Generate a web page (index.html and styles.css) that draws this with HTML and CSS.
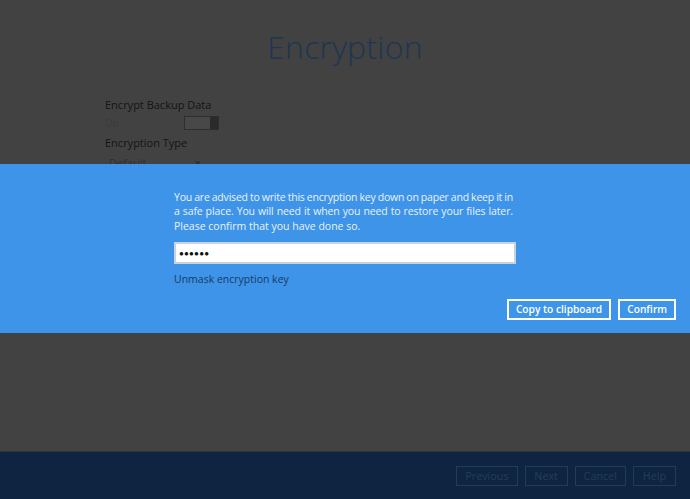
FILE: index.html
```html
<!DOCTYPE html>
<html>
<head>
<meta charset="utf-8">
<link rel="stylesheet" href="styles.css">
</head>
<body>
<div class="page">
  <main class="content">
    <h1 class="title">Encryption</h1>
    <div class="form">
      <div class="label">Encrypt Backup Data</div>
      <div class="toggle-row">
        <span class="state">On</span>
        <span class="toggle"><span class="knob"></span></span>
      </div>
      <div class="label">Encryption Type</div>
      <div class="select">Default <span class="arrow">&#9662;</span></div>
    </div>
  </main>
  <footer class="footer">
    <button class="fbtn">Previous</button>
    <button class="fbtn">Next</button>
    <button class="fbtn">Cancel</button>
    <button class="fbtn">Help</button>
  </footer>
</div>
<div class="dialog">
  <div class="dialog-inner">
    <p class="msg"><span class="line l1">You are advised to write this encryption key down on paper and keep it in</span> <span class="line l2">a safe place. You will need it when you need to restore your files later.</span> <span class="line l3">Please confirm that you have done so.</span></p>
    <div class="input">&#9679;&#9679;&#9679;&#9679;&#9679;&#9679;</div>
    <div class="unmask">Unmask encryption key</div>
  </div>
  <div class="actions">
    <button class="dbtn">Copy to clipboard</button>
    <button class="dbtn">Confirm</button>
  </div>
</div>
</body>
</html>
```
FILE: styles.css
```css
html, body {
  margin: 0;
  padding: 0;
}
body {
  width: 690px;
  height: 499px;
  overflow: hidden;
  background: #424242;
  font-family: "Open Sans", "Noto Sans", sans-serif;
  position: relative;
}
.page {
  display: flex;
  flex-direction: column;
  height: 499px;
}
.content {
  flex: 1;
  display: flex;
  flex-direction: column;
}
.title {
  margin: 24px 0 0 0;
  text-align: center;
  font-weight: 300;
  font-size: 32px;
  line-height: 46px;
  color: #1d3653;
  letter-spacing: 0.2px;
}
.form {
  margin: 27px 0 0 105px;
  display: flex;
  flex-direction: column;
}
.label {
  font-size: 11px;
  line-height: 16px;
  color: #141414;
}
.toggle-row {
  display: flex;
  align-items: center;
  height: 20px;
  margin-bottom: 2px;
}
.state {
  font-size: 10px;
  color: #3a3a3a;
  width: 79px;
}
.toggle {
  width: 35px;
  height: 14px;
  box-sizing: border-box;
  border: 1px solid #2e2e2e;
  background: #484848;
  display: flex;
  justify-content: flex-end;
}
.knob {
  width: 8px;
  background: #2a2a2a;
}
.select {
  margin-top: 4px;
  width: 92px;
  font-size: 11px;
  color: #2e2e2e;
  padding-left: 4px;
  display: flex;
  justify-content: space-between;
}
.footer {
  height: 48px;
  background: #0f2440;
  border-top: 1px solid #343434;
  display: flex;
  justify-content: flex-end;
  align-items: center;
  gap: 7px;
  padding-right: 14px;
  box-sizing: border-box;
}
.fbtn {
  height: 20px;
  padding: 0 8px;
  min-width: 43px;
  background: transparent;
  border: 1px solid #213b5a;
  color: #233e5e;
  font-family: "Open Sans", "Noto Sans", sans-serif;
  font-size: 10.8px;
}
.dialog {
  position: absolute;
  left: 0;
  top: 164px;
  width: 690px;
  height: 169px;
  background: #3d94e8;
  box-sizing: border-box;
  padding-top: 26px;
}
.dialog-inner {
  width: 342px;
  margin-left: 174px;
}
.msg {
  margin: 0;
  width: 339px;
  font-size: 10.5px;
  line-height: 14.3px;
  color: #eaf2fb;
}
.line {
  display: block;
  white-space: nowrap;
}
.l1, .l2 {
  text-align: justify;
  text-align-last: justify;
}
.l1 {
  letter-spacing: -0.2px;
  word-spacing: -1px;
}
.l2 {
  letter-spacing: -0.1px;
}
.input {
  margin-top: 9px;
  height: 22px;
  box-sizing: border-box;
  background: #fff;
  border: 2px solid #c9d3de;
  font-size: 8px;
  letter-spacing: 0.2px;
  color: #111;
  padding-left: 3px;
  display: flex;
  align-items: center;
}
.unmask {
  margin-top: 8px;
  font-size: 10.5px;
  color: #1b3b63;
}
.actions {
  display: flex;
  justify-content: flex-end;
  gap: 7px;
  padding-right: 14px;
  margin-top: 13px;
}
.dbtn {
  height: 21px;
  padding: 0 7px;
  background: transparent;
  border: 2px solid #ffffff;
  color: #ffffff;
  font-family: "Open Sans", "Noto Sans", sans-serif;
  font-size: 10.2px;
  font-weight: 600;
}
```
